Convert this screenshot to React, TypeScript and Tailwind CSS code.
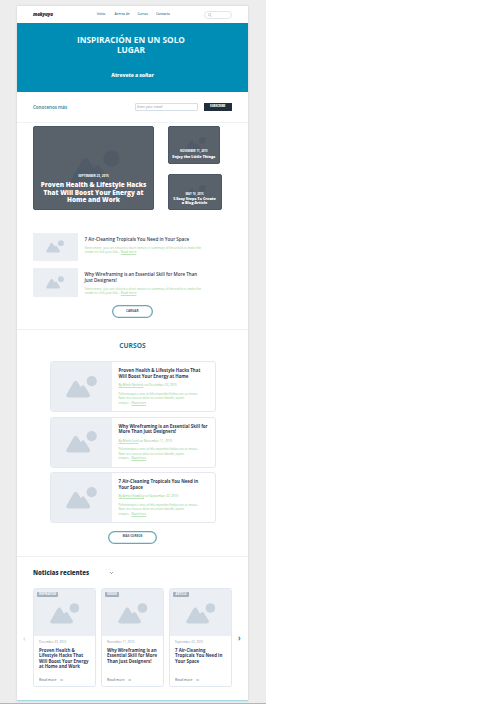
import type { ReactNode } from "react";

function Scene({ className }: { className: string }) {
  return (
    <svg viewBox="0 0 31 22" className={className} fill="currentColor" aria-hidden="true">
      <circle cx="25.7" cy="5.2" r="5.1" />
      <path d="M.7 18.3 7.6 6.2Q9.7 3.1 11.8 6.2L14.8 11.2Q17 7.6 19 10.8L23.6 18Q25.2 21.2 21.6 21.4H2.8Q-.9 21.2.7 18.3Z" />
    </svg>
  );
}

function Lines({ lines, className }: { lines: string[]; className: string }) {
  return (
    <div className={`whitespace-nowrap ${className}`}>
      {lines.map((line) => (
        <div key={line}>{line}</div>
      ))}
    </div>
  );
}

function Featured({ date, title, className, dateClass, titleClass, sceneClass }: {
  date: string; title: string[]; className: string; dateClass: string; titleClass: string; sceneClass: string;
}) {
  return (
    <article className={`relative flex flex-col items-center justify-end rounded-[2px] border border-[#4c5765] bg-[#59616b] text-center text-white ${className}`}>
      <Scene className={`absolute text-[#515b67] ${sceneClass}`} />
      <div className={`relative whitespace-nowrap font-bold ${dateClass}`}>{date}</div>
      <Lines lines={title} className={`relative font-extrabold ${titleClass}`} />
    </article>
  );
}

function Article({ title }: { title: string[] }) {
  return (
    <article className="flex h-[28.5px]">
      <div className="flex w-[44.5px] shrink-0 items-center justify-center bg-[#ebeff4]">
        <Scene className="h-[13px] w-[18px] text-[#c8d2dd]" />
      </div>
      <div className="flex flex-col gap-[3.8px] pl-[7px] pt-[4px]">
        <Lines lines={title} className="text-[4.55px] font-semibold leading-[5.5px] text-[#343b54]" />
        <div className="whitespace-nowrap text-[3.05px] leading-[4.5px] text-[#8fd18e]">
          <div>Ventromere, you can choose a short extract or summary of the article to make the</div>
          <div>reader to click your link... <span className="underline decoration-[#bfe5be] decoration-[0.4px]">Read more</span></div>
        </div>
      </div>
    </article>
  );
}

function Course({ title, author, date }: { title: string[]; author: string; date: string }) {
  return (
    <article className="flex h-[51px] w-[166px] overflow-hidden rounded-[3px] border-[1.5px] border-[#e3e9ef] bg-white">
      <div className="flex w-[61px] shrink-0 items-center justify-center bg-[#ebeff4]">
        <Scene className="h-[22px] w-[31px] text-[#c8d2dd]" />
      </div>
      <div className="whitespace-nowrap pl-[7px] pt-[6px]">
        <Lines lines={title} className="text-[4.45px] font-bold leading-[5.6px] text-[#343b54]" />
        <div className="mt-[4px] text-[3.1px] leading-[4px] text-[#83cb83]">
          <span className="underline decoration-[#bfe5be] decoration-[0.4px]">By {author}</span> on {date}
        </div>
        <div className="mt-[4.5px] text-[2.88px] leading-[4.5px] text-[#8fd18e]">
          <div>Pellentesque a urna ut felis imperdiet finibus nec ac massa.</div>
          <div>Nam sit a risus ac dolor ea ornare blandit, sapien</div>
          <div>tempor... <span className="underline decoration-[#bfe5be] decoration-[0.4px]">Read more</span></div>
        </div>
      </div>
    </article>
  );
}

function News({ tag, date, title, tagClass }: { tag: string; date: string; title: string[]; tagClass: string }) {
  return (
    <article className="flex h-[99px] w-[63px] shrink-0 flex-col overflow-hidden rounded-[2.5px] border border-[#e2e8ef] bg-white">
      <div className="relative flex h-[47px] shrink-0 items-center justify-center bg-[#ebeff4]">
        <div className={`absolute left-[3px] top-[3px] flex h-[5px] items-center justify-center rounded-[1px] bg-[#a2b0bf] text-[2.7px] font-bold leading-none text-white ${tagClass}`}>{tag}</div>
        <Scene className="mt-[2px] h-[21px] w-[29.5px] text-[#c8d2dd]" />
      </div>
      <div className="flex grow flex-col whitespace-nowrap pl-[5px]">
        <div className="mt-[4px] text-[3px] leading-[4px] text-[#8e98a6]">{date}</div>
        <Lines lines={title} className="mt-[3.5px] text-[4.4px] font-bold leading-[5.6px] text-[#343b54]" />
        <div className="mb-[4px] mt-auto flex items-center gap-[4px] text-[3.4px] leading-[4px] text-[#535f70]">
          <span>Read more</span>
          <svg viewBox="0 0 6 4" className="h-[2px] w-[3px]" fill="none" stroke="currentColor" strokeWidth=".8"><path d="M0 2h5M3.5.5 5.2 2 3.5 3.5" /></svg>
        </div>
      </div>
    </article>
  );
}

function Pill({ children, className }: { children: ReactNode; className: string }) {
  return (
    <button className={`flex h-[13px] items-center justify-center rounded-full text-[3.1px] font-bold leading-none text-[#345c77] shadow-[inset_0_0_0_1.3px_#68a7b8] ${className}`}>
      {children}
    </button>
  );
}

export default function App() {
  return (
    <div className="h-[704px] w-[501px] overflow-hidden bg-white font-['Open_Sans','Noto_Sans',sans-serif]">
      <div className="flex h-[704px] w-[266px] flex-col border-b border-[#b5b5b5] bg-[#ededed] pt-[6px]">
        <main className="ml-[17px] flex h-[694.5px] w-[231px] shrink-0 flex-col border-b-[1.5px] border-[#a6d7e4] bg-white shadow-[0_0_2px_#c9c9c9]">
          <header className="flex h-[17px] shrink-0 items-center pl-[16px] pr-[16px]">
            <div className="w-[64px] text-[4.6px] font-extrabold italic leading-none tracking-[-0.1px] text-[#242a35]">mokyuyo</div>
            <nav className="flex w-[107px] whitespace-nowrap text-[3.2px] font-semibold leading-none text-[#39758d]">
              <span className="w-[17.5px]">Inicio</span>
              <span className="w-[23px]">Acerca de</span>
              <span className="w-[18.5px]">Cursos</span>
              <span>Contacto</span>
            </nav>
            <div className="flex h-[8px] w-[28px] items-center rounded-full border border-[#e0e7ee] pl-[3px]">
              <svg viewBox="0 0 10 10" className="size-[4px] text-[#a8b6c4]" fill="none" stroke="currentColor" strokeWidth="1.5"><circle cx="4" cy="4" r="3.2" /><path d="m6.5 6.5 3 3" /></svg>
            </div>
          </header>

          <section className="flex h-[69px] shrink-0 flex-col items-center bg-[#008db5] pt-[12px] text-center text-[#eefcff]">
            <Lines lines={["INSPIRACIÓN EN UN SOLO", "LUGAR"]} className="mr-[3px] text-[8.3px] font-bold leading-[10px]" />
            <p className="mt-[15.5px] text-[5.1px] font-extrabold leading-[9px] tracking-[-0.1px]">Atrevete a soñar</p>
          </section>

          <section className="flex h-[30.5px] shrink-0 items-center border-b border-[#f0f2f4] px-[16px]">
            <h2 className="w-[102px] text-[4.5px] font-semibold leading-none text-[#2b7893]">Conocenos más</h2>
            <div className="flex h-[8.5px] w-[63px] items-center rounded-[1px] border border-[#d6dee6] pl-px text-[3.5px] italic leading-none text-[#8e9aa5]">Enter your email</div>
            <button className="ml-[5.5px] flex h-[8.5px] w-[28.5px] items-center justify-center bg-[#222e3a] text-[2.8px] font-extrabold leading-none text-white">SUBSCRIBE</button>
          </section>

          <section className="flex h-[87.5px] shrink-0 gap-[13.5px] pl-[16px] pt-[3.5px]">
            <Featured
              date="SEPTEMBER 23, 2015"
              title={["Proven Health & Lifestyle Hacks", "That Will Boost Your Energy at", "Home and Work"]}
              className="h-[84px] w-[121px] pb-[5px]"
              dateClass="text-[3.05px] leading-[4px]"
              titleClass="mt-[3px] text-[6.4px] leading-[7.75px]"
              sceneClass="left-[36px] top-[23px] h-[36px] w-[50px]"
            />
            <div className="flex flex-col gap-[9.5px]">
              <Featured
                date="NOVEMBER 11, 2015"
                title={["Enjoy the Little Things"]}
                className="h-[38px] w-[52.5px] pb-[4px]"
                dateClass="text-[2.8px] leading-[4px]"
                titleClass="mt-[1px] text-[3.95px] leading-[5px] tracking-[-0.1px]"
                sceneClass="left-[16px] top-[10px] h-[15px] w-[21px]"
              />
              <Featured
                date="MAY 10, 2015"
                title={["5 Easy Steps To Create", "a Blog Article"]}
                className="h-[36.5px] w-[54px] pb-[3px]"
                dateClass="text-[2.8px] leading-[4px]"
                titleClass="mt-[1px] text-[3.95px] leading-[4.6px] tracking-[-0.1px]"
                sceneClass="left-[16px] top-[10px] h-[15px] w-[21px]"
              />
            </div>
          </section>

          <section className="flex h-[119.5px] shrink-0 flex-col border-b border-[#edf0f3] pl-[16px] pt-[22.5px]">
            <div className="flex flex-col gap-[7px]">
              <Article title={["7 Air-Cleaning Tropicals You Need in Your Space"]} />
              <Article title={["Why Wireframing is an Essential Skill for More Than", "Just Designers!"]} />
            </div>
            <Pill className="ml-[79px] mt-[8.5px] w-[40.5px]">CARGAR</Pill>
          </section>

          <section className="flex h-[227px] shrink-0 flex-col items-center border-b border-[#edf0f3] pt-[11px]">
            <h2 className="text-[6.7px] font-bold leading-[9px] text-[#24748e]">CURSOS</h2>
            <div className="mt-[11.5px] flex flex-col gap-[4.5px]">
              <Course title={["Proven Health & Lifestyle Hacks That", "Will Boost Your Energy at Home"]} author="Mitch Skolnick" date="December 23, 2015" />
              <Course title={["Why Wireframing is an Essential Skill for", "More Than Just Designers!"]} author="Mitch Lord" date="November 11, 2015" />
              <Course title={["7 Air-Cleaning Tropicals You Need in", "Your Space"]} author="Annie Hawkley" date="September 22, 2015" />
            </div>
            <Pill className="mt-[7.5px] w-[48.5px]">MAS CURSOS</Pill>
          </section>

          <section className="flex grow flex-col">
            <div className="flex h-[31.5px] shrink-0 items-center pl-[16px] pt-[2px]">
              <h2 className="w-[77px] whitespace-nowrap text-[6px] font-extrabold leading-none text-[#173c50]">Noticias recientes</h2>
              <svg viewBox="0 0 6 4" className="h-[2px] w-[3px] text-[#4b7188]" fill="none" stroke="currentColor" strokeWidth="1.5"><path d="m.5.5 2.5 2.5L5.5.5" /></svg>
            </div>
            <div className="flex items-center">
              <span className="w-[16px] pl-[6px] text-[8px] leading-none text-[#b6c4ce]">‹</span>
              <div className="flex gap-[5px]">
                <News tag="INSPIRATION" tagClass="w-[21px]" date="December 23, 2015" title={["Proven Health &", "Lifestyle Hacks That", "Will Boost Your Energy", "at Home and Work"]} />
                <News tag="DESIGN" tagClass="w-[14px]" date="November 11, 2015" title={["Why Wireframing is an", "Essential Skill for More", "Than Just Designers!"]} />
                <News tag="ARTICLE" tagClass="w-[16px]" date="September 22, 2015" title={["7 Air-Cleaning", "Tropicals You Need in", "Your Space"]} />
              </div>
              <span className="pl-[6px] text-[8px] font-semibold leading-none text-[#405365]">›</span>
            </div>
          </section>
        </main>
      </div>
    </div>
  );
}
